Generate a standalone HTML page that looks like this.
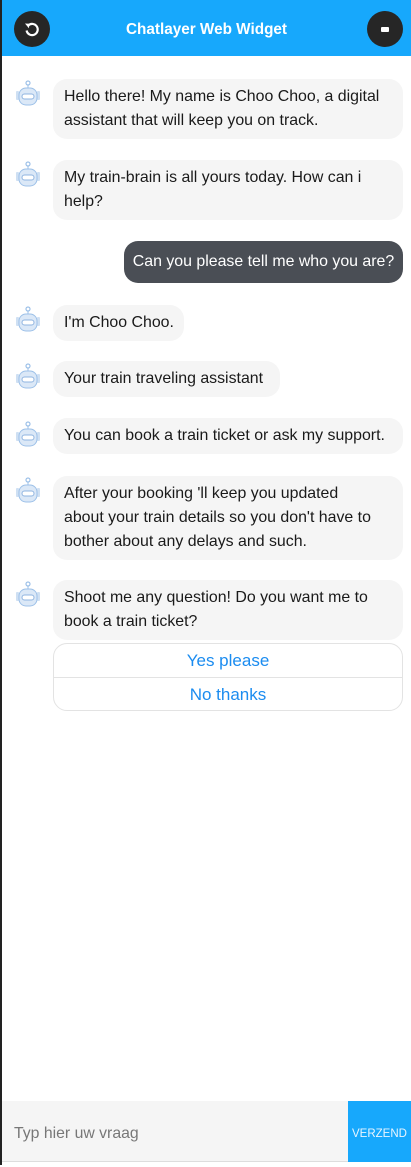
<!DOCTYPE html>
<html><head><meta charset="utf-8"><style>
*{box-sizing:border-box;margin:0;padding:0}
body{width:411px;height:1165px;position:relative;background:#fff;font-family:"Liberation Sans",sans-serif;overflow:hidden}
.lb{position:absolute;left:0;top:0;width:2px;height:1165px;background:#222}
.hdr{position:absolute;left:2px;top:0;width:409px;height:56px;background:#17a8fc;color:#fff;font-weight:bold;font-size:15.3px;text-align:center;line-height:60px}
.cb{position:absolute;top:11px;width:36px;height:36px;border-radius:50%;background:#262626;color:#fff}
.b{position:absolute;left:53px;background:#f5f5f5;border-radius:14px;color:#1a1a1a;font-size:15.9px;line-height:24px;padding:6px 11px;max-width:350px}
.u{background:#4a4e55;color:#fff;left:auto;right:8px}
.ic{position:absolute;left:13px;width:30px;height:28px}
.qr{position:absolute;left:53px;top:643px;width:350px;height:68px;border:1px solid #e3e3e3;border-radius:14px;color:#1b8cf0;font-size:17px;text-align:center}
.qr div{height:34px;line-height:34px}
.in{position:absolute;left:2px;top:1101px;width:346px;height:61px;background:#f5f5f5;color:#777;font-size:15.8px;line-height:66px;padding-left:12px;border-bottom:1px solid #ddd}
.btn{position:absolute;left:348px;top:1101px;width:63px;height:61px;background:#17a8fc;color:#e8f5ff;font-size:11.5px;line-height:66px;text-align:center}
</style></head><body>
<div class="lb"></div>
<div class="hdr">Chatlayer Web Widget</div>
<div class="cb" style="left:14px"><svg width="36" height="36" viewBox="0 0 36 36"><path d="M14.2 14.5A5.6 5.6 0 1 1 12.6 19.5" fill="none" stroke="#fff" stroke-width="2.2"/><path d="M11 12.5l4.5 0.3-0.6 4.5z" fill="#fff"/></svg></div>
<div class="cb" style="left:367px"><div style="position:absolute;left:14px;top:16px;width:8px;height:5px;background:#fff;border-radius:1px"></div></div>

<svg class="ic" style="top:80px" viewBox="0 0 30 28"><circle cx="15" cy="3" r="2" fill="none" stroke="#9cc0e8" stroke-width="1.2"/><path d="M15 5v3" stroke="#9cc0e8"/><rect x="3" y="11" width="3" height="9" rx="1" fill="#cfe0f3"/><rect x="24" y="11" width="3" height="9" rx="1" fill="#cfe0f3"/><rect x="6" y="8" width="18" height="17" rx="7" fill="#dbe8f7" stroke="#9cc0e8"/><rect x="9" y="14" width="12" height="5" rx="2.5" fill="#fff" stroke="#8fb4e0"/></svg>
<div class="b" style="top:79px;width:350px">Hello there! My name is Choo Choo, a digital assistant that will keep you on track.</div>

<svg class="ic" style="top:161px" viewBox="0 0 30 28"><circle cx="15" cy="3" r="2" fill="none" stroke="#9cc0e8" stroke-width="1.2"/><path d="M15 5v3" stroke="#9cc0e8"/><rect x="3" y="11" width="3" height="9" rx="1" fill="#cfe0f3"/><rect x="24" y="11" width="3" height="9" rx="1" fill="#cfe0f3"/><rect x="6" y="8" width="18" height="17" rx="7" fill="#dbe8f7" stroke="#9cc0e8"/><rect x="9" y="14" width="12" height="5" rx="2.5" fill="#fff" stroke="#8fb4e0"/></svg>
<div class="b" style="top:160px;width:350px">My train-brain is all yours today. How can i<br>help?</div>

<div class="b u" style="top:241px;height:42px;width:279px;padding-top:9px;white-space:nowrap;text-align:center;padding-left:0;padding-right:0">Can you please tell me who you are?</div>

<svg class="ic" style="top:306px" viewBox="0 0 30 28"><circle cx="15" cy="3" r="2" fill="none" stroke="#9cc0e8" stroke-width="1.2"/><path d="M15 5v3" stroke="#9cc0e8"/><rect x="3" y="11" width="3" height="9" rx="1" fill="#cfe0f3"/><rect x="24" y="11" width="3" height="9" rx="1" fill="#cfe0f3"/><rect x="6" y="8" width="18" height="17" rx="7" fill="#dbe8f7" stroke="#9cc0e8"/><rect x="9" y="14" width="12" height="5" rx="2.5" fill="#fff" stroke="#8fb4e0"/></svg>
<div class="b" style="top:305px;width:131px;white-space:nowrap">I'm Choo Choo.</div>

<svg class="ic" style="top:363px" viewBox="0 0 30 28"><circle cx="15" cy="3" r="2" fill="none" stroke="#9cc0e8" stroke-width="1.2"/><path d="M15 5v3" stroke="#9cc0e8"/><rect x="3" y="11" width="3" height="9" rx="1" fill="#cfe0f3"/><rect x="24" y="11" width="3" height="9" rx="1" fill="#cfe0f3"/><rect x="6" y="8" width="18" height="17" rx="7" fill="#dbe8f7" stroke="#9cc0e8"/><rect x="9" y="14" width="12" height="5" rx="2.5" fill="#fff" stroke="#8fb4e0"/></svg>
<div class="b" style="top:361px;width:227px;white-space:nowrap">Your train traveling assistant</div>

<svg class="ic" style="top:421px" viewBox="0 0 30 28"><circle cx="15" cy="3" r="2" fill="none" stroke="#9cc0e8" stroke-width="1.2"/><path d="M15 5v3" stroke="#9cc0e8"/><rect x="3" y="11" width="3" height="9" rx="1" fill="#cfe0f3"/><rect x="24" y="11" width="3" height="9" rx="1" fill="#cfe0f3"/><rect x="6" y="8" width="18" height="17" rx="7" fill="#dbe8f7" stroke="#9cc0e8"/><rect x="9" y="14" width="12" height="5" rx="2.5" fill="#fff" stroke="#8fb4e0"/></svg>
<div class="b" style="top:418px;width:350px;white-space:nowrap">You can book a train ticket or ask my support.</div>

<svg class="ic" style="top:477px" viewBox="0 0 30 28"><circle cx="15" cy="3" r="2" fill="none" stroke="#9cc0e8" stroke-width="1.2"/><path d="M15 5v3" stroke="#9cc0e8"/><rect x="3" y="11" width="3" height="9" rx="1" fill="#cfe0f3"/><rect x="24" y="11" width="3" height="9" rx="1" fill="#cfe0f3"/><rect x="6" y="8" width="18" height="17" rx="7" fill="#dbe8f7" stroke="#9cc0e8"/><rect x="9" y="14" width="12" height="5" rx="2.5" fill="#fff" stroke="#8fb4e0"/></svg>
<div class="b" style="top:476px;width:350px">After your booking 'll keep you updated<br>about your train details so you don't have to<br>bother about any delays and such.</div>

<svg class="ic" style="top:581px" viewBox="0 0 30 28"><circle cx="15" cy="3" r="2" fill="none" stroke="#9cc0e8" stroke-width="1.2"/><path d="M15 5v3" stroke="#9cc0e8"/><rect x="3" y="11" width="3" height="9" rx="1" fill="#cfe0f3"/><rect x="24" y="11" width="3" height="9" rx="1" fill="#cfe0f3"/><rect x="6" y="8" width="18" height="17" rx="7" fill="#dbe8f7" stroke="#9cc0e8"/><rect x="9" y="14" width="12" height="5" rx="2.5" fill="#fff" stroke="#8fb4e0"/></svg>
<div class="b" style="top:580px;width:350px;height:60px">Shoot me any question! Do you want me to<br>book a train ticket?</div>
<div class="qr"><div style="border-bottom:1px solid #e3e3e3">Yes please</div><div>No thanks</div></div>

<div class="in">Typ hier uw vraag</div>
<div class="btn">VERZEND</div>
</body></html>
